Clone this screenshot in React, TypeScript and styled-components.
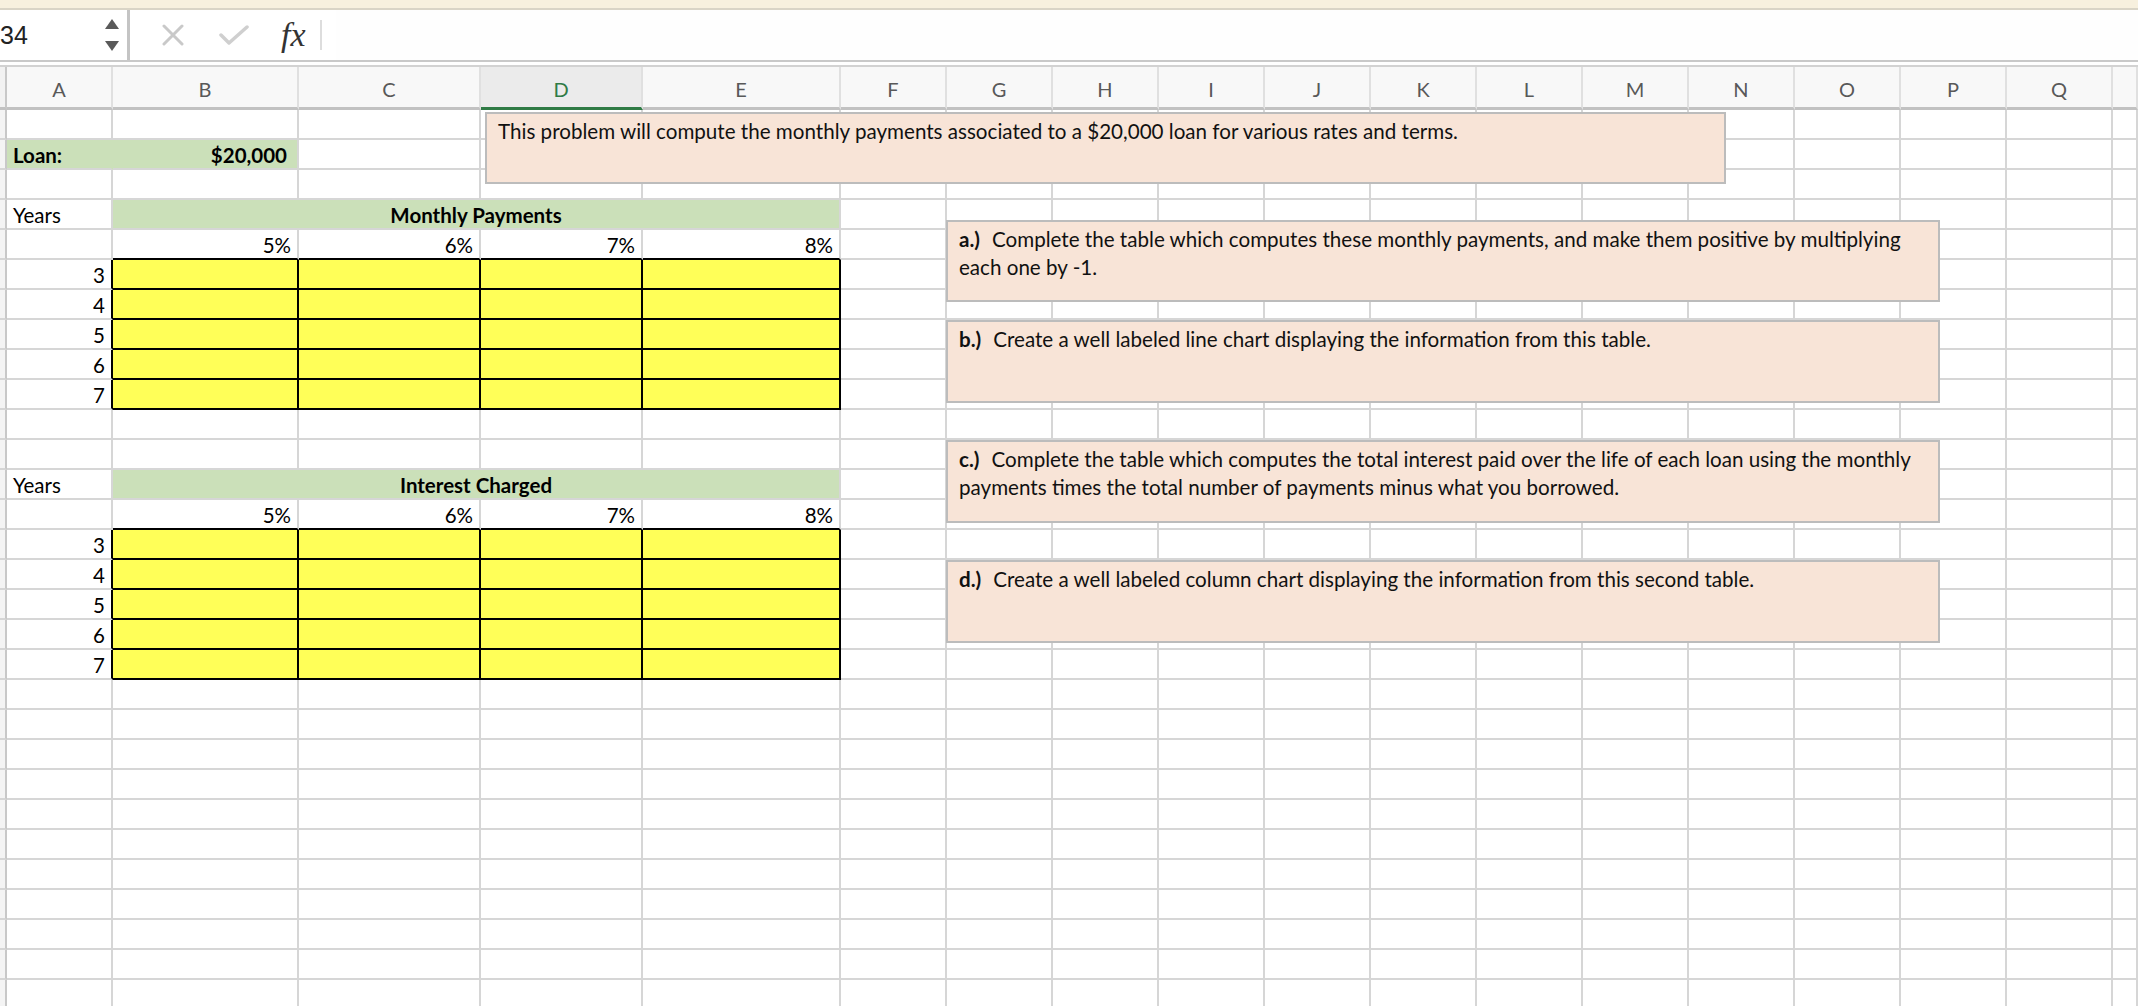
import React from "react";
import styled, { createGlobalStyle } from "styled-components";

const GRID = "#d6d6d6";
const BLACK = "#000000";
const GREEN = "#cbe0b9";
const YELLOW = "#ffff58";

const GlobalStyle = createGlobalStyle`
  html, body {
    margin: 0;
    padding: 0;
    background: #ffffff;
  }
  body {
    font-family: Lato, "Open Sans", sans-serif;
    overflow: hidden;
  }
`;

const Window = styled.div`
  width: 2138px;
  height: 1006px;
  display: flex;
  flex-direction: column;
  overflow: hidden;
  background: #ffffff;
`;

const TopStrip = styled.div`
  height: 8px;
  background: #f7f0de;
  border-bottom: 2px solid #d9d4c6;
`;

const FormulaBar = styled.div`
  height: 50px;
  display: flex;
  align-items: stretch;
  border-bottom: 2px solid #c9c9c9;
`;

const NameBox = styled.div`
  width: 130px;
  border-right: 3px solid #c4c4c4;
  display: flex;
  align-items: center;
  justify-content: space-between;
  padding-right: 8px;
  box-sizing: border-box;
  font-family: "Liberation Sans", Arial, sans-serif;
  font-size: 25px;
  color: #222222;
`;

const NameText = styled.span`
  margin-left: 0;
`;

const Spinner = styled.div`
  display: flex;
  flex-direction: column;
  gap: 12px;
`;

const Controls = styled.div`
  display: flex;
  align-items: center;
`;

const IconSlot = styled.span<{ $ml: number }>`
  display: flex;
  align-items: center;
  margin-left: ${(p) => p.$ml}px;
`;

const Fx = styled.span`
  margin-left: 32px;
  font-family: "Liberation Serif", "DejaVu Serif", serif;
  font-style: italic;
  font-size: 34px;
  color: #333333;
  line-height: 1;
  margin-top: 0;
`;

const Separator = styled.span`
  width: 2px;
  height: 30px;
  background: #dddddd;
  margin-left: 14px;
`;

const FormulaInput = styled.div`
  flex: 1;
  margin-left: 14px;
  background: #fefefe;
`;

const BarGap = styled.div`
  height: 3px;
  background: #ffffff;
  border-bottom: 2px solid #d2d2d2;
`;

const SheetArea = styled.div`
  position: relative;
  flex: 1;
  overflow: hidden;
`;

const Row = styled.div<{ $h: number }>`
  display: grid;
  grid-template-columns: 7px 106px 186px 182px 162px 198px repeat(12, 106px) 1fr;
  height: ${(p) => p.$h}px;
`;

const Corner = styled.div`
  background: #f2f2f2;
  border-right: 2px solid #c8c8c8;
  border-bottom: 3px solid #c2c2c2;
`;

const RowStub = styled.div`
  background: #f4f4f4;
  border-right: 2px solid #c8c8c8;
  border-bottom: 2px solid ${GRID};
`;

const ColHead = styled.div<{ $active?: boolean }>`
  display: flex;
  align-items: center;
  justify-content: center;
  box-sizing: border-box;
  background: ${(p) => (p.$active ? "#ebebeb" : "#f8f8f8")};
  border-right: 2px solid #e0e0e0;
  border-bottom: 3px solid ${(p) => (p.$active ? "#2f7b45" : "#c2c2c2")};
  color: ${(p) => (p.$active ? "#2f7b45" : "#595959")};
  font-size: 20px;
  padding-top: 3px;
`;

const Cell = styled.div<{
  $span?: number;
  $fill?: string;
  $right?: string;
  $bottom?: string;
  $bold?: boolean;
  $align?: "left" | "right" | "center";
  $pad?: number;
}>`
  grid-column: span ${(p) => p.$span ?? 1};
  box-sizing: border-box;
  display: flex;
  align-items: flex-end;
  justify-content: ${(p) =>
    p.$align === "right" ? "flex-end" : p.$align === "center" ? "center" : "flex-start"};
  padding: 0 ${(p) => p.$pad ?? 6}px 0 6px;
  background: ${(p) => p.$fill ?? "#ffffff"};
  border-right: 2px solid ${(p) => p.$right ?? GRID};
  border-bottom: 2px solid ${(p) => p.$bottom ?? GRID};
  font-size: 20.5px;
  line-height: 1.2;
  font-weight: ${(p) => (p.$bold ? 700 : 400)};
  color: #000000;
  white-space: nowrap;
  overflow: visible;
`;

const Note = styled.div`
  position: absolute;
  box-sizing: border-box;
  background: #f8e4d7;
  border: 2px solid #bcbcbc;
  padding: 3px 11px;
  font-size: 20.6px;
  line-height: 28px;
  color: #111111;
`;

const NoteLine = styled.div`
  white-space: nowrap;
`;

const NoteLabel = styled.span`
  font-weight: 700;
  margin-right: 12px;
`;

const COLUMNS = ["A", "B", "C", "D", "E", "F", "G", "H", "I", "J", "K", "L", "M", "N", "O", "P", "Q", ""];

interface CellSpec {
  text?: string;
  span?: number;
  fill?: string;
  right?: string;
  bottom?: string;
  bold?: boolean;
  align?: "left" | "right" | "center";
  pad?: number;
}

interface Block {
  years: number;
  title: string;
}

const BLOCKS: Block[] = [
  { years: 4, title: "Monthly Payments" },
  { years: 13, title: "Interest Charged" },
];

const RATES = ["5%", "6%", "7%", "8%"];

function buildRow(r: number): CellSpec[] {
  const rest = (from: number): CellSpec[] =>
    Array.from({ length: COLUMNS.length - from }, () => ({}));

  if (r === 2) {
    return [
      { text: "Loan:", bold: true, fill: GREEN, right: GREEN },
      { text: "$20,000", bold: true, fill: GREEN, align: "right", pad: 10 },
      ...rest(2),
    ];
  }

  for (const b of BLOCKS) {
    if (r === b.years) {
      return [
        { text: "Years" },
        { text: b.title, span: 4, bold: true, fill: GREEN, align: "center" },
        ...rest(5),
      ];
    }
    if (r === b.years + 1) {
      return [
        {},
        ...RATES.map((t) => ({ text: t, align: "right" as const, bottom: BLACK })),
        ...rest(5),
      ];
    }
    const idx = r - (b.years + 2);
    if (idx >= 0 && idx < 5) {
      return [
        { text: String(idx + 3), align: "right", right: BLACK },
        ...RATES.map(() => ({ fill: YELLOW, right: BLACK, bottom: BLACK })),
        ...rest(5),
      ];
    }
  }
  return rest(0);
}

const NOTES = [
  {
    top: 45,
    left: 485,
    width: 1241,
    height: 72,
    label: "",
    lines: [
      "This problem will compute the monthly payments associated to a $20,000 loan for various rates and terms.",
    ],
  },
  {
    top: 153,
    left: 946,
    width: 994,
    height: 82,
    label: "a.)",
    lines: [
      "Complete the table which computes these monthly payments, and make them positive by multiplying",
      "each one by -1.",
    ],
  },
  {
    top: 253,
    left: 946,
    width: 994,
    height: 83,
    label: "b.)",
    lines: ["Create a well labeled line chart displaying the information from this table."],
  },
  {
    top: 373,
    left: 946,
    width: 994,
    height: 83,
    label: "c.)",
    lines: [
      "Complete the table which computes the total interest paid over the life of each loan using the monthly",
      "payments times the total number of payments minus what you borrowed.",
    ],
  },
  {
    top: 493,
    left: 946,
    width: 994,
    height: 83,
    label: "d.)",
    lines: ["Create a well labeled column chart displaying the information from this second table."],
  },
];

const ROW_COUNT = 30;

const App: React.FC = () => {
  return (
    <Window>
      <GlobalStyle />
      <TopStrip />
      <FormulaBar>
        <NameBox>
          <NameText>34</NameText>
          <Spinner>
            <svg width="14" height="10" viewBox="0 0 14 10">
              <polygon points="7,0 14,10 0,10" fill="#5a5a5a" />
            </svg>
            <svg width="14" height="10" viewBox="0 0 14 10">
              <polygon points="0,0 14,0 7,10" fill="#5a5a5a" />
            </svg>
          </Spinner>
        </NameBox>
        <Controls>
          <IconSlot $ml={32}>
            <svg width="22" height="22" viewBox="0 0 22 22">
              <path d="M2 2 L20 20 M20 2 L2 20" stroke="#c9c9c9" strokeWidth="3" strokeLinecap="round" />
            </svg>
          </IconSlot>
          <IconSlot $ml={35}>
            <svg width="30" height="22" viewBox="0 0 30 22">
              <polyline
                points="2,11 10,19 28,3"
                fill="none"
                stroke="#cfcfcf"
                strokeWidth="3.5"
                strokeLinecap="round"
                strokeLinejoin="round"
              />
            </svg>
          </IconSlot>
          <Fx>fx</Fx>
          <Separator />
        </Controls>
        <FormulaInput />
      </FormulaBar>
      <BarGap />
      <SheetArea>
        <Row $h={43}>
          <Corner />
          {COLUMNS.map((c, i) => (
            <ColHead key={i} $active={c === "D"}>
              {c}
            </ColHead>
          ))}
        </Row>
        {Array.from({ length: ROW_COUNT }, (_, i) => i + 1).map((r) => (
          <Row key={r} $h={30}>
            <RowStub />
            {buildRow(r).map((cell, j) => (
              <Cell
                key={j}
                $span={cell.span}
                $fill={cell.fill}
                $right={cell.right}
                $bottom={cell.bottom}
                $bold={cell.bold}
                $align={cell.align}
                $pad={cell.pad}
              >
                {cell.text}
              </Cell>
            ))}
          </Row>
        ))}
        {NOTES.map((n, i) => (
          <Note key={i} style={{ top: n.top, left: n.left, width: n.width, height: n.height }}>
            {n.lines.map((line, k) => (
              <NoteLine key={k}>
                {k === 0 && n.label && <NoteLabel>{n.label}</NoteLabel>}
                {line}
              </NoteLine>
            ))}
          </Note>
        ))}
      </SheetArea>
    </Window>
  );
};

export default App;
